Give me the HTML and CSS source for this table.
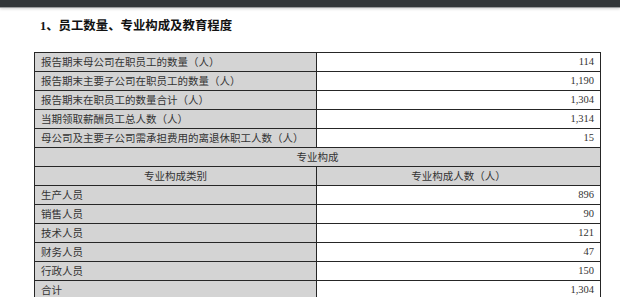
FILE: index.html
```html
<!DOCTYPE html>
<html lang="zh-CN">
<head>
<meta charset="utf-8">
<title>员工情况</title>
<link rel="stylesheet" href="styles.css">
</head>
<body>
<div class="topbar"></div>
<main class="page">
  <h1 class="title">1、员工数量、专业构成及教育程度</h1>
  <table class="grid">
    <colgroup><col class="c1"><col class="c2"></colgroup>
    <tbody>
      <tr><td class="lbl">报告期末母公司在职员工的数量（人）</td><td class="num">114</td></tr>
      <tr><td class="lbl">报告期末主要子公司在职员工的数量（人）</td><td class="num">1,190</td></tr>
      <tr><td class="lbl">报告期末在职员工的数量合计（人）</td><td class="num">1,304</td></tr>
      <tr><td class="lbl">当期领取薪酬员工总人数（人）</td><td class="num">1,314</td></tr>
      <tr><td class="lbl">母公司及主要子公司需承担费用的离退休职工人数（人）</td><td class="num">15</td></tr>
      <tr><td class="head" colspan="2">专业构成</td></tr>
      <tr><td class="head">专业构成类别</td><td class="head">专业构成人数（人）</td></tr>
      <tr><td class="lbl">生产人员</td><td class="num">896</td></tr>
      <tr><td class="lbl">销售人员</td><td class="num">90</td></tr>
      <tr><td class="lbl">技术人员</td><td class="num">121</td></tr>
      <tr><td class="lbl">财务人员</td><td class="num">47</td></tr>
      <tr><td class="lbl">行政人员</td><td class="num">150</td></tr>
      <tr><td class="lbl">合计</td><td class="num">1,304</td></tr>
    </tbody>
  </table>
</main>
</body>
</html>
```

FILE: styles.css
```css
html, body {
  margin: 0;
  padding: 0;
  background: #ffffff;
  overflow: hidden;
}

.topbar {
  height: 7px;
  background: #323639;
  border-bottom: 1px solid #9a9c9e;
  box-shadow: 0 1px 3px rgba(0, 0, 0, 0.18);
}

.page {
  padding: 11px 20px 0 34px;
}

.title {
  margin: 0 0 18px 6px;
  font-family: "Liberation Serif", "Noto Sans CJK SC", serif;
  font-weight: bold;
  font-size: 12.4px;
  line-height: 15px;
  color: #111111;
}

.grid {
  border-collapse: collapse;
  width: 566px;
  table-layout: fixed;
  color: #333333;
}

.c1 { width: 282px; }
.c2 { width: 284px; }

.grid td {
  border: 1px solid #262626;
  height: 18px;
  padding: 0 6px;
  font-size: 10.5px;
  line-height: 18px;
  white-space: nowrap;
  overflow: hidden;
}

.lbl {
  background: #d4d4d4;
  font-family: "Noto Sans CJK SC", sans-serif;
}

.num {
  background: #ffffff;
  text-align: right;
  font-family: "Liberation Serif", serif;
  font-size: 11px;
}

.grid td.head {
  background: #d4d4d4;
  text-align: center;
  font-family: "Noto Sans CJK SC", sans-serif;
}
```
